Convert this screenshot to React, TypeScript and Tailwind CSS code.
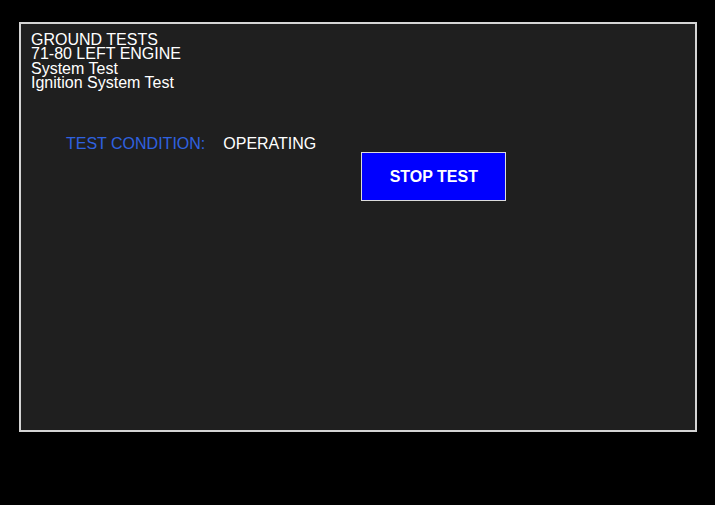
export default function App() {
  return (
    <div className="w-[715px] h-[505px] bg-black pt-[22px] pl-[19px] font-['Liberation_Sans',Arial,sans-serif]">
      <div className="w-[678px] h-[410px] bg-[#1f1f1f] border-2 border-[#d4d4d4] pt-[9px] pl-[10px]">
        <div className="text-white text-[16px] leading-[14.3px]">
          <div>GROUND TESTS</div>
          <div>71-80 LEFT ENGINE</div>
          <div>System Test</div>
          <div>Ignition System Test</div>
        </div>

        <div className="flex items-start mt-[45px] ml-[35px]">
          <div className="flex gap-[18px] text-[16px] leading-[18px]">
            <span className="text-[#2f62e0]">TEST CONDITION:</span>
            <span className="text-white">OPERATING</span>
          </div>
          <button className="ml-[45px] mt-[17px] w-[145px] h-[49px] bg-[#0000ff] border border-[#dcdcdc] text-white font-bold text-[16px]">
            STOP TEST
          </button>
        </div>
      </div>
    </div>
  );
}
